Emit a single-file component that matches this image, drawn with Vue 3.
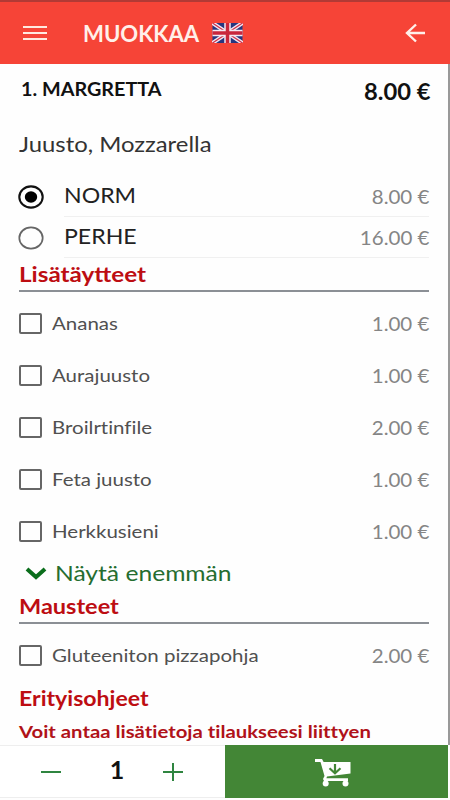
<template>
  <main class="app">
    <header class="top-bar">
      <button class="icon-btn" aria-label="Menu">
        <svg width="24" height="18" viewBox="0 0 24 18">
          <path d="M0 3h24M0 9h24M0 15h24" stroke="#ffe9e0" stroke-width="2" />
        </svg>
      </button>
      <h1 class="title"><span>MUOKKAA</span></h1>
      <svg class="flag" width="31" height="20" viewBox="0 0 60 40">
        <rect width="60" height="40" fill="#26357f" />
        <path d="M0 0l60 40M60 0L0 40" stroke="#f4e9f2" stroke-width="8" />
        <path d="M0 0l60 40M60 0L0 40" stroke="#cf3049" stroke-width="2.5" />
        <path d="M30 0v40M0 20h60" stroke="#f4e9f2" stroke-width="13" />
        <path d="M30 0v40M0 20h60" stroke="#c9263c" stroke-width="7" />
      </svg>
      <button class="icon-btn back" aria-label="Back">
        <svg width="22" height="20" viewBox="0 0 22 20">
          <path d="M20 10H2M11 1.5L2 10l9 8.5" fill="none" stroke="#fff0ea" stroke-width="2.4" />
        </svg>
      </button>
    </header>

    <section class="content">
      <div class="product">
        <h2><span>1. MARGRETTA</span></h2>
        <strong><span>8.00 €</span></strong>
      </div>
      <p class="ingredients"><span>Juusto, Mozzarella</span></p>

      <div v-for="size in sizes" :key="size.name" class="size-row" @click="selectedSize = size.name">
        <svg class="radio" width="26" height="24" viewBox="0 0 26 24">
          <ellipse cx="13" cy="12" rx="11.7" ry="10.6" fill="none"
            :stroke="selectedSize === size.name ? '#111' : '#666'"
            :stroke-width="selectedSize === size.name ? 2.1 : 1.7" />
          <ellipse v-if="selectedSize === size.name" cx="13" cy="12" rx="6.2" ry="5.7" fill="#000" />
        </svg>
        <div class="size-body">
          <span class="size-name">{{ size.name }}</span>
          <span class="price">{{ size.price }} €</span>
        </div>
      </div>

      <h3 class="group-title"><span>Lisätäytteet</span></h3>
      <label v-for="item in toppings" :key="item.name" class="option">
        <input v-model="selected" type="checkbox" :value="item.name" />
        <span class="option-name">{{ item.name }}</span>
        <span class="price">{{ item.price }} €</span>
      </label>

      <button class="more">
        <svg width="22" height="14" viewBox="0 0 22 14">
          <path d="M2 3l9 8 9-8" fill="none" stroke="#0b6e1c" stroke-width="4" />
        </svg>
        <span>Näytä enemmän</span>
      </button>

      <h3 class="group-title spices"><span>Mausteet</span></h3>
      <label class="option">
        <input v-model="selected" type="checkbox" value="Gluteeniton pizzapohja" />
        <span class="option-name">Gluteeniton pizzapohja</span>
        <span class="price">2.00 €</span>
      </label>

      <h3 class="instructions"><span>Erityisohjeet</span></h3>
      <p class="hint"><span>Voit antaa lisätietoja tilaukseesi liittyen</span></p>
    </section>

    <footer class="bottom-bar">
      <div class="counter">
        <button aria-label="Decrease" @click="count = Math.max(1, count - 1)">
          <svg width="20" height="18" viewBox="0 0 20 18">
            <path d="M0 9h20" stroke="#2f8540" stroke-width="2" />
          </svg>
        </button>
        <b>{{ count }}</b>
        <button aria-label="Increase" @click="count++">
          <svg width="20" height="18" viewBox="0 0 20 18">
            <path d="M0 9h20M10 0v18" stroke="#2f8540" stroke-width="2" />
          </svg>
        </button>
      </div>
      <button class="cart" aria-label="Add to cart">
        <svg width="36" height="28" viewBox="0 0 36 28">
          <path d="M0 0h7l1.6 3H35.5v11.5L12 17.5l-.6 1.8H33V22H9l-1-2 1.5-3L5.5 3H0z" fill="#fff" />
          <circle cx="10.7" cy="24.5" r="3" fill="#fff" />
          <circle cx="30.5" cy="24.5" r="3" fill="#fff" />
          <path d="M20 5v9M14.5 9.3l5.5 5 5.5-5" fill="none" stroke="#438636" stroke-width="2.2" />
        </svg>
      </button>
    </footer>
  </main>
</template>

<script setup>
import { ref } from 'vue';

const sizes = [
  { name: 'NORM', price: '8.00' },
  { name: 'PERHE', price: '16.00' },
];

const toppings = [
  { name: 'Ananas', price: '1.00' },
  { name: 'Aurajuusto', price: '1.00' },
  { name: 'Broilrtinfile', price: '2.00' },
  { name: 'Feta juusto', price: '1.00' },
  { name: 'Herkkusieni', price: '1.00' },
];

const selectedSize = ref('NORM');
const selected = ref([]);
const count = ref(1);
</script>

<style>
body {
  margin: 0;
  background: #fefefe;
}
</style>

<style scoped>
.app {
  box-sizing: border-box;
  height: 800px;
  padding-bottom: 2px;
  display: flex;
  flex-direction: column;
  overflow: hidden;
  font-family: Lato, 'Open Sans', sans-serif;
  background: #fefefe;
}

h1, h2, h3, p {
  margin: 0;
}

button {
  padding: 0;
  border: none;
  background: none;
  font-family: inherit;
  cursor: pointer;
}

svg {
  display: block;
}

/* the typeface is drawn slightly extended */
span {
  display: inline-block;
  white-space: nowrap;
  transform: scaleX(1.1);
  transform-origin: left center;
}

.top-bar {
  box-sizing: border-box;
  height: 64px;
  flex: none;
  display: flex;
  align-items: center;
  padding: 0 23px;
  border-top: 2px solid #b23a35;
  background: #f64437;
}

.title {
  width: 117px;
  margin-left: 36px;
  font-size: 22px;
  font-weight: 700;
  color: #fff0ea;
}

.title span {
  transform: scaleX(1.005);
}

.flag {
  margin-left: 12px;
}

.back {
  margin-left: auto;
}

.content {
  flex: 1;
  min-height: 0;
  overflow: hidden;
  padding: 0 19px;
  border-right: 2px solid #999;
}

.product {
  height: 54px;
  display: flex;
  align-items: center;
  justify-content: space-between;
}

.product h2 {
  padding: 0 0 5px 2px;
  font-size: 18px;
  font-weight: 700;
  color: #111;
}

.product strong {
  margin-right: -2px;
  font-size: 22px;
  color: #111;
}

.product strong span,
.price {
  transform: scaleX(1.08);
  transform-origin: right center;
}

.ingredients {
  height: 58px;
  line-height: 53px;
  font-size: 20.5px;
  color: #333;
}

.ingredients span {
  transform: scaleX(1.163);
}

.size-row {
  height: 41px;
  display: flex;
  align-items: center;
}

.radio {
  margin-left: -1px;
}

.size-body {
  box-sizing: border-box;
  height: 41px;
  flex: 1;
  margin-left: 20px;
  display: flex;
  align-items: center;
  justify-content: space-between;
  border-bottom: 1px solid #f0f0f0;
}

.size-name {
  padding-bottom: 3px;
  font-size: 21px;
  color: #222;
}

.price {
  margin-left: auto;
  font-size: 19px;
  color: #858585;
}

.group-title {
  box-sizing: border-box;
  height: 34px;
  margin-bottom: 6px;
  border-bottom: 2px solid #8b8f95;
  line-height: 32px;
  font-size: 21px;
  font-weight: 700;
  color: #bd0d12;
}

.group-title span {
  transform: scaleX(1.155);
}

.spices span {
  transform: scaleX(1.12);
}

.option {
  height: 51.8px;
  display: flex;
  align-items: center;
}

.option input {
  appearance: none;
  box-sizing: border-box;
  width: 23px;
  height: 21px;
  margin: 0 10px 0 0;
  border: 2px solid #666;
  border-radius: 2px;
}

.option input:checked {
  background: #666;
}

.option-name {
  font-size: 17.5px;
  font-variant-ligatures: none;
  color: #505050;
  transform: scaleX(1.17);
}

.more {
  height: 33px;
  margin-left: 6px;
  display: flex;
  align-items: center;
  gap: 8px;
  font-size: 21px;
  color: #256d30;
}

.more span {
  padding-bottom: 2px;
  transform: scaleX(1.172);
}

.instructions {
  height: 33px;
  line-height: 31px;
  font-size: 21px;
  font-variant-ligatures: none;
  color: #bd0d12;
}

.hint {
  line-height: 34px;
  font-size: 17.5px;
  font-weight: 700;
  font-variant-ligatures: none;
  color: #b01219;
}

.hint span {
  transform: scaleX(1.16);
}

.bottom-bar {
  height: 53px;
  flex: none;
  display: flex;
}

.counter {
  box-sizing: border-box;
  width: 225px;
  display: flex;
  align-items: center;
  justify-content: space-between;
  padding: 0 42px 0 41px;
  border-top: 1px solid #eee;
  border-bottom: 1px solid #eee;
  background: #fff;
}

.counter b {
  padding: 0 0 5px 4px;
  margin-left: 6px;
  font-size: 25px;
  color: #111;
}

.cart {
  flex: 1;
  display: flex;
  align-items: center;
  justify-content: center;
  margin-right: 2px;
  padding: 2px 8px 0 0;
  background: #438636;
}
</style>
